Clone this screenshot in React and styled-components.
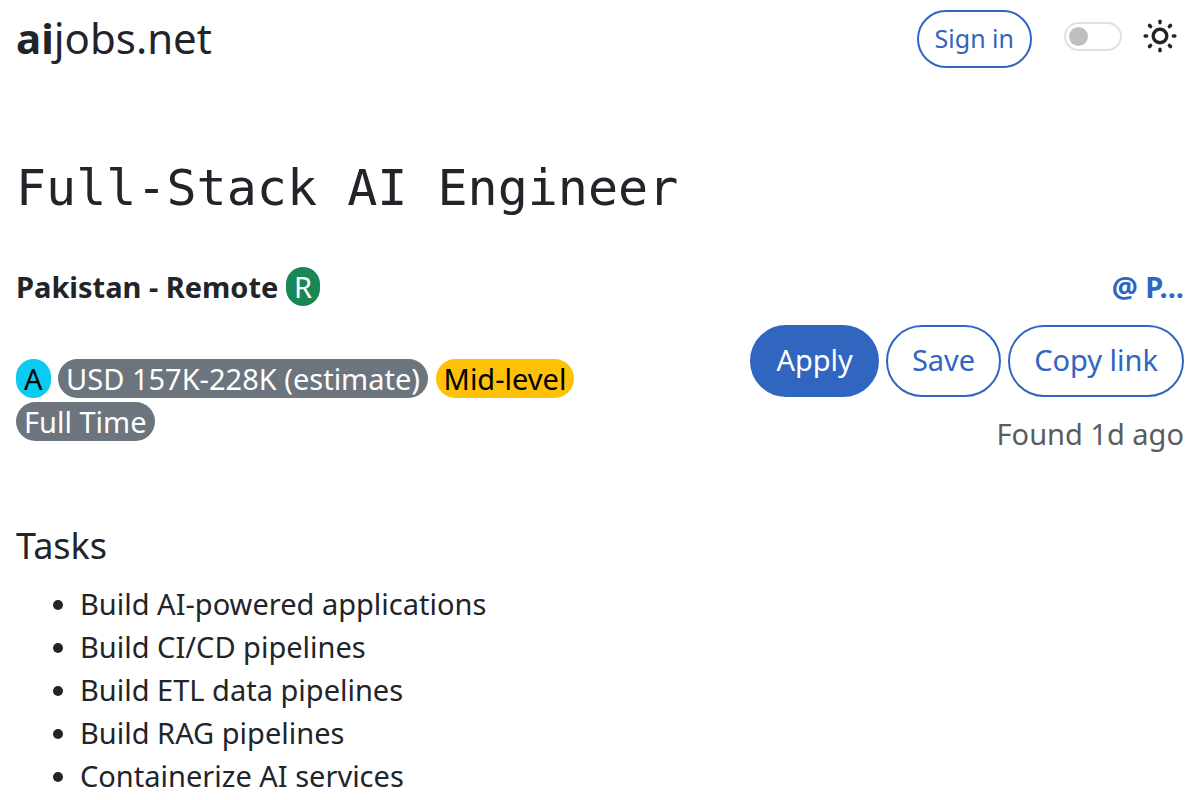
import styled, { createGlobalStyle, css } from "styled-components";
import { useState } from "react";

const tasks = [
  "Build AI-powered applications",
  "Build CI/CD pipelines",
  "Build ETL data pipelines",
  "Build RAG pipelines",
  "Containerize AI services",
];

export default function App() {
  const [dark, setDark] = useState(false);

  return (
    <>
      <GlobalStyle />
      <Navbar>
        <Brand href="#">
          <b>ai</b>jobs.net
        </Brand>
        <NavTools>
          <Button $small type="button">
            Sign in
          </Button>
          <ThemeLabel>
            <Switch
              type="checkbox"
              role="switch"
              aria-label="Dark mode"
              checked={dark}
              onChange={(e) => setDark(e.target.checked)}
            />
            <SunIcon />
          </ThemeLabel>
        </NavTools>
      </Navbar>
      <Main>
        <Title>Full-Stack AI Engineer</Title>
        <InfoRow>
          <Location>
            Pakistan - Remote <Badge $bg="#198754">R</Badge>
          </Location>
          <Company href="#">@ P...</Company>
        </InfoRow>
        <DetailRow>
          <Badges>
            <Badge $bg="#0dcaf0" $color="#000">A</Badge>{" "}
            <Badge>USD 157K-228K (estimate)</Badge>{" "}
            <Badge $bg="#ffc107" $color="#000">Mid-level</Badge>{" "}
            <Badge>Full Time</Badge>
          </Badges>
          <Side>
            <Actions>
              <Button $primary type="button">
                Apply
              </Button>
              <Button type="button">Save</Button>
              <Button type="button">Copy link</Button>
            </Actions>
            <Found>Found 1d ago</Found>
          </Side>
        </DetailRow>
        <SectionTitle>Tasks</SectionTitle>
        <TaskList>
          {tasks.map((task) => (
            <li key={task}>{task}</li>
          ))}
        </TaskList>
      </Main>
    </>
  );
}

function SunIcon() {
  return (
    <svg width="34" height="34" viewBox="0 0 34 34" fill="none" stroke="currentColor" aria-hidden="true">
      <circle cx="17" cy="17" r="6.8" strokeWidth="3.4" />
      <path
        d="M17 2.2v1.4M17 30.4v1.4M2.2 17h1.4M30.4 17h1.4M6.5 6.5l1.1 1.1M26.4 26.4l1.1 1.1M6.5 27.5l1.1-1.1M26.4 7.6l1.1-1.1"
        strokeWidth="3.6"
        strokeLinecap="round"
      />
    </svg>
  );
}

const GlobalStyle = createGlobalStyle`
  * {
    box-sizing: border-box;
  }
  body {
    margin: 0;
    background: #fff;
    color: #212529;
    font-family: "Noto Sans", sans-serif;
    font-size: 29px;
    line-height: 43px;
  }
`;

const Navbar = styled.nav`
  display: flex;
  align-items: flex-start;
  justify-content: space-between;
  padding: 10px 16px;
`;

const Brand = styled.a`
  color: inherit;
  font-size: 42px;
  line-height: 56px;
  text-decoration: none;
`;

const NavTools = styled.div`
  display: flex;
  align-items: center;
  gap: 32px;
`;

const Button = styled.button`
  border: 2px solid #3065c0;
  border-radius: 36px;
  background: ${({ $primary }) => ($primary ? "#3065c0" : "transparent")};
  color: ${({ $primary }) => ($primary ? "#fff" : "#3065c0")};
  font-family: inherit;
  font-size: 29px;
  line-height: 44px;
  padding: 11px 24px 13px;
  white-space: nowrap;
  cursor: pointer;

  ${({ $small }) =>
    $small &&
    css`
      font-size: 25px;
      line-height: 38px;
      padding: 7px 16px 9px;
    `}
`;

const ThemeLabel = styled.label`
  display: flex;
  align-items: center;
  gap: 21px;
  padding: 0 7px 6px 0;
`;

const Switch = styled.input`
  appearance: none;
  display: flex;
  align-items: center;
  width: 58px;
  height: 29px;
  margin: 0;
  padding: 0 3px;
  border: 2px solid #dee2e6;
  border-radius: 15px;

  &::before {
    content: "";
    width: 19px;
    height: 19px;
    border-radius: 50%;
    background: #bfbfbf;
  }
  &:checked {
    justify-content: flex-end;
  }
`;

const Main = styled.main`
  height: calc(100vh - 78px);
  padding: 80px 16px 0;
  overflow: hidden;
`;

const Title = styled.h1`
  margin: 0;
  font-family: "DejaVu Sans Mono", monospace;
  font-size: 50px;
  font-weight: 400;
  line-height: 60px;
`;

const InfoRow = styled.div`
  display: flex;
  justify-content: space-between;
  margin-top: 47px;
`;

const Location = styled.div`
  font-weight: 700;
`;

const Company = styled.a`
  color: #3065c0;
  font-weight: 700;
  text-decoration: none;
`;

const Badge = styled.span`
  padding: 0 8px;
  border-radius: 20px;
  background: ${({ $bg }) => $bg || "#6c757d"};
  color: ${({ $color }) => $color || "#fff"};
  font-weight: 400;
  white-space: nowrap;
`;

const DetailRow = styled.div`
  display: flex;
  justify-content: space-between;
  margin-top: 17px;
`;

const Badges = styled.div`
  flex: 0 1 50%;
  padding-top: 32px;
`;

const Side = styled.div`
  text-align: right;
`;

const Actions = styled.div`
  display: flex;
  justify-content: flex-end;
  gap: 7px;
`;

const Found = styled.div`
  margin-top: 15px;
  color: #595c5f;
`;

const SectionTitle = styled.h2`
  margin: 69px 0 15px;
  font-size: 36px;
  font-weight: 400;
  line-height: 43px;
`;

const TaskList = styled.ul`
  margin: 0;
  padding-left: 64px;
`;
